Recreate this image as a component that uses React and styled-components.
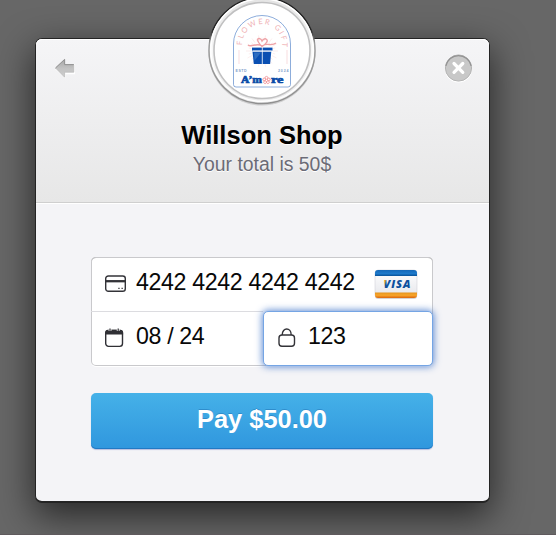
import React from "react";
import styled, { createGlobalStyle } from "styled-components";

const GlobalStyle = createGlobalStyle`
  * { box-sizing: border-box; }
  body { margin: 0; background: #676767; font-family: "Liberation Sans", Arial, sans-serif; }
`;

const Page = styled.main`
  display: flex;
  align-items: flex-start;
  width: 556px;
  height: 535px;
  padding: 38px 0 0 35px;
  overflow: hidden;
  background: #676767;
  border-bottom: 1px solid #5f5a5d;
`;

const Card = styled.section`
  position: relative;
  display: flex;
  flex-direction: column;
  width: 455px;
  height: 465px;
  border: 1px solid #242424;
  border-bottom-width: 2px;
  border-radius: 7px;
  background: #f4f4f7;
  box-shadow: 0 12px 36px 1px rgba(0, 0, 0, 0.62);
`;

const Header = styled.header`
  display: flex;
  flex-direction: column;
  height: 164px;
  padding: 14px 16px 0 18px;
  border-bottom: 1px solid #cfcfcf;
  border-radius: 6px 6px 0 0;
  background: linear-gradient(#f5f5f7, #e7e7e7);
  box-shadow: inset 0 1px 0 #fff, 0 1px 0 #fff;
`;

const HeaderActions = styled.div`
  display: flex;
  justify-content: space-between;
  align-items: flex-start;
  height: 67px;
`;

const IconButton = styled.button`
  display: flex;
  padding: 0;
  border: 0;
  background: none;
`;

const ShopName = styled.h1`
  margin: 0;
  padding-right: 3px;
  font-size: 25.5px;
  line-height: 30px;
  text-align: center;
  text-shadow: 0 1px 0 #fff;
  color: #000;
`;

const Total = styled.p`
  margin: 0;
  padding: 1px 3px 0 0;
  font-size: 19.4px;
  line-height: 27px;
  text-align: center;
  text-shadow: 0 1px 0 #fff;
  color: #6b6b76;
`;

const LogoBadge = styled.div`
  position: absolute;
  top: -43px;
  left: 172px;
  display: flex;
  width: 108px;
  height: 110px;
`;

const Form = styled.form`
  display: flex;
  flex-direction: column;
  gap: 27px;
  padding: 54px 56px 0 55px;
`;

const Fields = styled.div`
  display: grid;
  grid-template-columns: 172px 170px;
  grid-template-rows: 54px 55px;
  height: 109px;
  border-radius: 5px;
  background: #fff;
  box-shadow: inset 0 0 0 1px #c9c9cc, inset 0 1px 0 #aaa, 0 1px 0 #fff;
`;

const Field = styled.label`
  display: flex;
  align-items: center;
  gap: 10px;
  grid-column: ${(p) => (p.$wide ? "1 / -1" : "auto")};
  padding: 0 15px 0 14px;
  ${(p) =>
    p.$divided &&
    `border-top: 1px solid #dcdce0; padding-bottom: 2px;`}
  ${(p) =>
    p.$focused &&
    `
    z-index: 1;
    padding-bottom: 1px;
    border: 1px solid #75a5e4;
    border-radius: 5px;
    background: #fff;
    box-shadow: 0 0 7px 1px rgba(75, 125, 205, 0.85);
  `}
`;

const Value = styled.span`
  flex: 1;
  font-size: 23.2px;
  line-height: 26px;
  padding-bottom: 4px;
  letter-spacing: -0.36px;
  padding-left: ${(p) => p.$indent || "0"};
  white-space: nowrap;
  color: #080808;
`;

const PayButton = styled.button`
  height: 56px;
  padding: 0 0 4px;
  border: 0;
  border-radius: 5px;
  background: linear-gradient(#45b1e8, #3097de);
  box-shadow: inset 0 -1px 0 #2279c4, 0 1px 1px rgba(50, 70, 170, 0.3);
  font: bold 25.4px "Liberation Sans", Arial, sans-serif;
  color: #fff;
  text-shadow: 0 -1px 0 rgba(0, 60, 130, 0.25);
`;

const Glyph = styled.svg`
  display: block;
  flex: none;
  margin-top: ${(p) => p.$drop || "0"};
`;

const BackIcon = () => (
  <Glyph width="23" height="24" viewBox="0 0 23 24" $drop="3px">
    <defs>
      <linearGradient id="back" x1="0" y1="0" x2="0" y2="1">
        <stop offset="0" stopColor="#a6a6a6" />
        <stop offset=".5" stopColor="#c2c2c2" />
        <stop offset="1" stopColor="#cecece" />
      </linearGradient>
    </defs>
    <path d="M1 13 11.5 22.5v-4.200H21V8H11.500Z" fill="#fff" />
    <path d="M1.500 12 10.600 3.400v5.200h9.200v7.600h-9.200v5Z" fill="url(#back)" stroke="#b8b8b8" strokeWidth=".7" />
    <path d="M1.500 12 10.600 3.400v5.200h9.200" fill="none" stroke="#929292" />
  </Glyph>
);

const CloseIcon = () => (
  <Glyph width="29" height="30" viewBox="0 0 29 30">
    <circle cx="14.500" cy="16" r="13.600" fill="#fff" />
    <circle cx="14.500" cy="15" r="13.100" fill="#c8c8c8" stroke="#b4b4b4" />
    <path d="M1.800 12.800a13 13 0 0 1 25.400 0" fill="none" stroke="#929292" strokeWidth="1.300" />
    <path d="m10 10.500 8.800 8.800m0-8.800L10 19.300" stroke="#fff" strokeWidth="3.200" strokeLinecap="round" />
  </Glyph>
);

const CardIcon = () => (
  <Glyph width="21" height="18" viewBox="0 0 21 18">
    <rect x=".7" y="1" width="19.600" height="15.300" rx="2.600" fill="#fff" stroke="#333338" strokeWidth="1.400" />
    <path d="M.7 6.200h19.600" stroke="#333338" strokeWidth="2.300" />
    <path d="M13.300 13.300h1.300M16.500 13.300h1.300" stroke="#333338" strokeWidth="1.300" />
  </Glyph>
);

const CalendarIcon = () => (
  <Glyph width="21" height="20" viewBox="0 0 21 20">
    <rect x=".7" y="2.400" width="16.800" height="16" rx="2.800" fill="#fff" stroke="#303035" strokeWidth="1.400" />
    <path d="M.1 6.600V4.600Q.1 1.700 3.100 1.700h12q3 0 3 2.900v2Z" fill="#303035" />
    <path d="M5 0v3M13.200 0v3" stroke="#fff" strokeWidth="2.800" />
    <path d="M5 .4v2.800M13.200 .4v2.800" stroke="#303035" strokeWidth="1.200" />
  </Glyph>
);

const LockIcon = () => (
  <Glyph width="18" height="20" viewBox="0 0 18 20">
    <rect x="1" y="7" width="15.500" height="11.300" rx="3" fill="none" stroke="#333338" strokeWidth="1.400" />
    <path d="M4.200 7c0-8 9-8 9 0" fill="none" stroke="#333338" strokeWidth="1.400" />
  </Glyph>
);

const VisaIcon = () => (
  <Glyph width="44" height="31" viewBox="0 0 44 31" $drop="1px">
    <defs>
      <linearGradient id="vb" x1="0" y1="0" x2="0" y2="1">
        <stop offset="0" stopColor="#1468b8" />
        <stop offset=".6" stopColor="#1d7acb" />
        <stop offset="1" stopColor="#075198" />
      </linearGradient>
      <linearGradient id="vw" x1="0" y1="0" x2="0" y2="1">
        <stop offset="0" stopColor="#fff" />
        <stop offset="1" stopColor="#e4e5ea" />
      </linearGradient>
      <linearGradient id="vo" x1="0" y1="0" x2="0" y2="1">
        <stop offset="0" stopColor="#e3931f" />
        <stop offset=".5" stopColor="#f8a62b" />
        <stop offset="1" stopColor="#db650c" />
      </linearGradient>
      <linearGradient id="vt" gradientUnits="userSpaceOnUse" x1="8.500" y1="12" x2="13" y2="14">
        <stop offset=".4" stopColor="#f3a22c" />
        <stop offset=".9" stopColor="#104f9d" />
      </linearGradient>
    </defs>
    <rect x="1" y="2" width="42" height="28" rx="3" fill="#000" opacity=".16" />
    <rect x="1" y="1" width="42" height="28" rx="3" fill="url(#vw)" stroke="#c9cad0" strokeWidth=".5" />
    <path d="M1 7V4q0-3 3-3h36q3 0 3 3v3Z" fill="url(#vb)" />
    <path d="M1 23.500v2.500q0 3 3 3h36q3 0 3-3v-2.500Z" fill="url(#vo)" />
    <text x="9.500" y="18.800" textLength="27" fontFamily="Open Sans, sans-serif" fontSize="11" fontStyle="italic" fontWeight="800" fill="url(#vt)">VISA</text>
  </Glyph>
);

const rays = Array.from({ length: 28 }, (_, i) => {
  const a = (i * Math.PI) / 14;
  const far = i % 2 ? 13.5 : 16;
  return `M${54 + Math.cos(a) * 11} ${55 + Math.sin(a) * 10.5}L${54 + Math.cos(a) * far} ${55 + Math.sin(a) * far}`;
}).join("");

const petals = [0, 72, 144, 216, 288];

const ShopLogo = () => (
  <svg width="108" height="110" viewBox="0 0 108 110">
    <defs>
      <linearGradient id="ring" x1="0" y1="0" x2="0" y2="1">
        <stop offset="0" stopColor="#e4e4e4" />
        <stop offset=".5" stopColor="#f7f7f7" />
        <stop offset="1" stopColor="#ebebec" />
      </linearGradient>
      <linearGradient id="rim" x1="0" y1="0" x2="0" y2="1">
        <stop offset=".3" stopColor="#222" />
        <stop offset=".44" stopColor="#a0a0a0" />
        <stop offset="1" stopColor="#8f8f8f" />
      </linearGradient>
      <path id="arc" d="M34.500 52A20 20.200 0 1 1 73.800 52" />
    </defs>
    <circle cx="54" cy="56" r="53.500" fill="#000" opacity=".14" />
    <circle cx="54" cy="54.500" r="53" fill="url(#ring)" stroke="url(#rim)" strokeWidth="1.500" />
    <circle cx="54" cy="54" r="51.200" fill="none" stroke="#fff" strokeWidth="1.500" />
    <circle cx="54" cy="54.500" r="48" fill="#fff" stroke="#c0c0c1" strokeWidth="1.600" />
    <path d="M25.500 88.500V48a28.500 28.500 0 0 1 57 0v40.500q0 2.500-2.500 2.500H28q-2.500 0-2.500-2.500Z" fill="none" stroke="#5b8acb" strokeWidth=".7" />
    <text fontFamily="Lato, sans-serif" fontSize="7.500" fill="#efb2b5">
      <textPath href="#arc" startOffset="3" textLength="66">FLOWER GIFT</textPath>
    </text>
    <path d={rays} stroke="#f8d9da" strokeWidth=".45" />
    <path d="M31 54v14M79 54v14" stroke="#f3c7ca" strokeWidth=".6" />
    <path d="M44.500 55.500h18.800l-1.200 12.500H45.800Z" fill="#0a4fb2" />
    <path d="M44 51.600h20.500v3H44Z" fill="#0a4fb2" />
    <path d="M54.300 51v17M45 55.100h18.500" stroke="#fff" strokeWidth=".8" />
    <path d="m46 56.500 7 0-6.500 8Z" fill="#2f6dc0" />
    <path d="M54 50.500c-7-7-4-9-1.500-7.500 1 .7 1.500 2 1.500 2s2-3 4-2c3 1.600 0 5-4 7.500ZM54 50c-5-4-11 2-14-1M54 50c6-4 9 1 14-3" fill="none" stroke="#eea2a6" strokeWidth="1.400" />
    <g fontFamily="Liberation Sans, sans-serif" fontSize="3.600" fontWeight="bold" fill="#7f9fcb">
      <text x="27.600" y="75.700" textLength="11">ESTD</text>
      <text x="70" y="75.700" textLength="10.500">2024</text>
    </g>
    <g fontFamily="Liberation Serif, serif" fontSize="11" fontWeight="bold" fill="#0b4ba7" stroke="#0b4ba7" strokeWidth=".7">
      <text x="33" y="87.200" textLength="21" lengthAdjust="spacingAndGlyphs">A’m</text>
      <text x="63" y="87.200" textLength="12.500" lengthAdjust="spacingAndGlyphs">re</text>
    </g>
    <g fill="none" stroke="#f0989d" strokeWidth=".9">
      {petals.map((a) => (
        <circle key={a} cx="58.500" cy="81.800" r="1.400" transform={`rotate(${a} 58.500 84.200)`} />
      ))}
    </g>
  </svg>
);

export default function App() {
  return (
    <>
      <GlobalStyle />
      <Page>
        <Card>
          <Header>
            <HeaderActions>
              <IconButton aria-label="Back"><BackIcon /></IconButton>
              <IconButton aria-label="Close"><CloseIcon /></IconButton>
            </HeaderActions>
            <ShopName>Willson Shop</ShopName>
            <Total>Your total is 50$</Total>
          </Header>
          <LogoBadge><ShopLogo /></LogoBadge>
          <Form>
            <Fields>
              <Field $wide>
                <CardIcon />
                <Value>4242 4242 4242 4242</Value>
                <VisaIcon />
              </Field>
              <Field $divided>
                <CalendarIcon />
                <Value>08 / 24</Value>
              </Field>
              <Field $focused>
                <LockIcon />
                <Value $indent="2px">123</Value>
              </Field>
            </Fields>
            <PayButton type="button">Pay $50.00</PayButton>
          </Form>
        </Card>
      </Page>
    </>
  );
}
